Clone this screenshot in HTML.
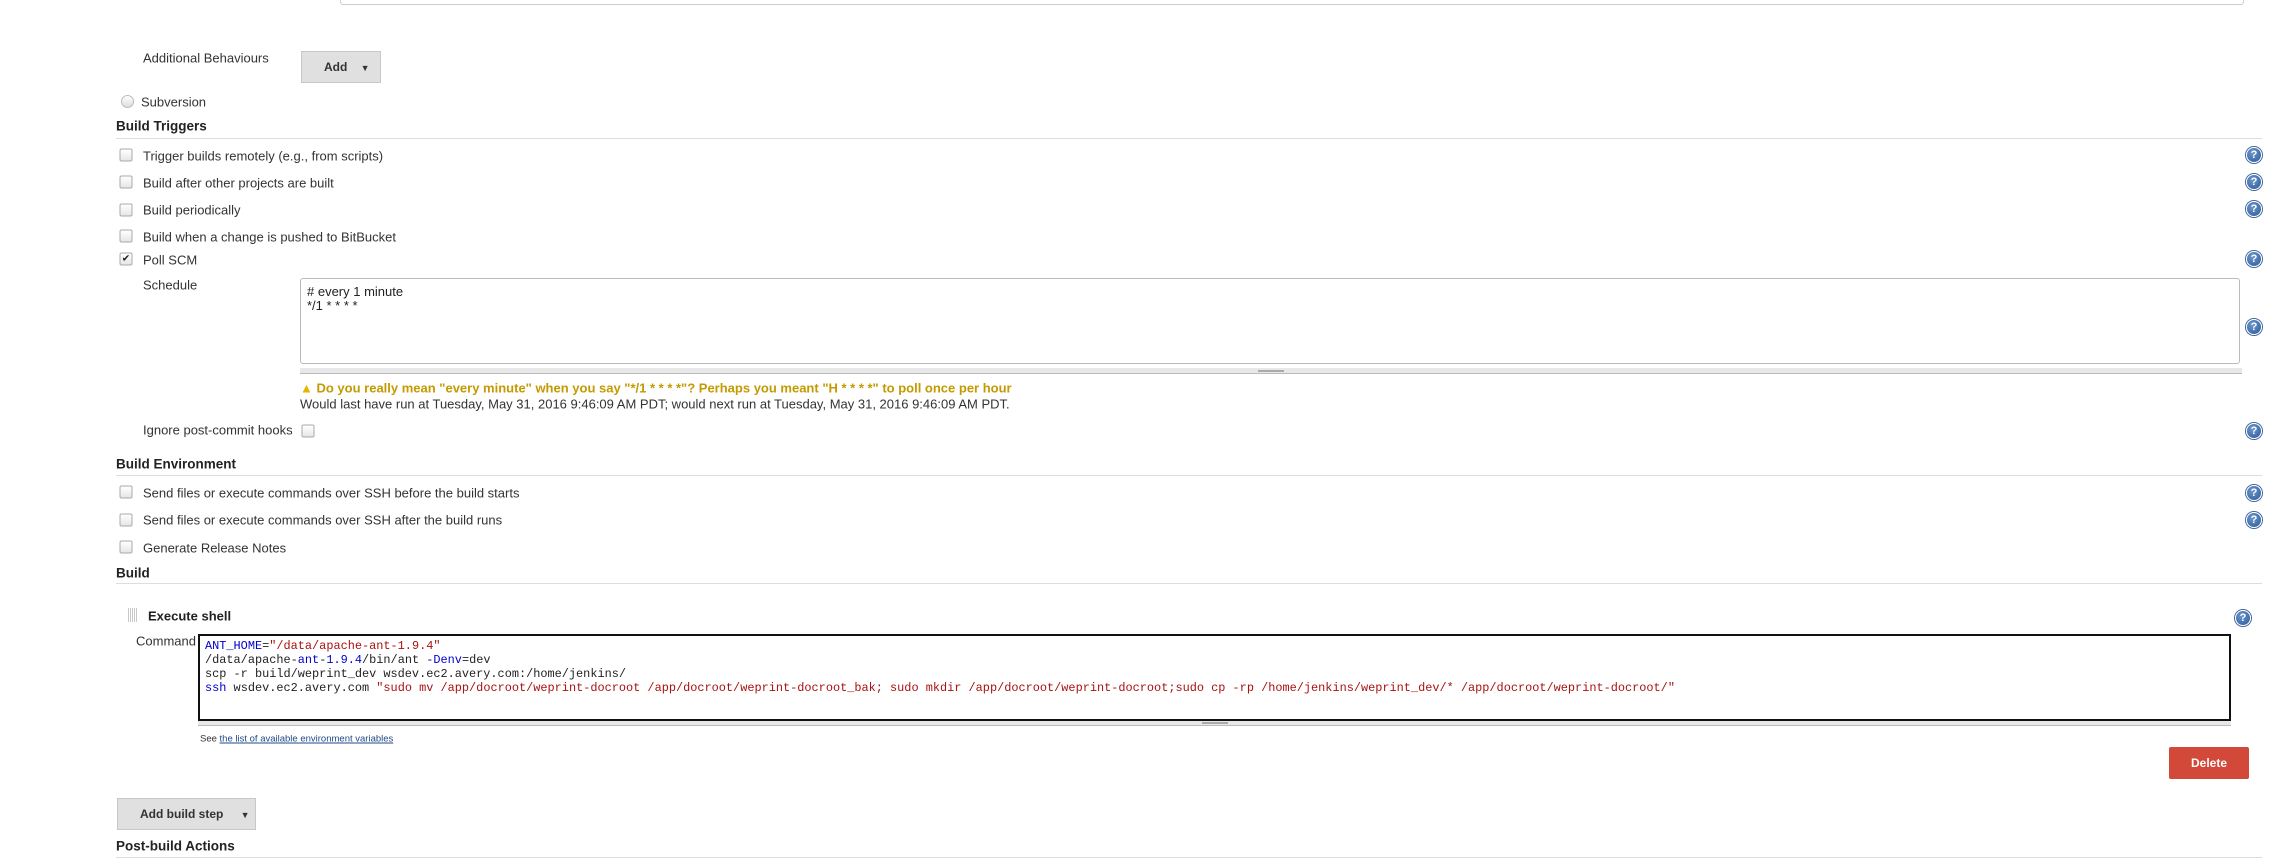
<!DOCTYPE html>
<html><head><meta charset="utf-8"><style>
body{margin:0;width:2271px;height:859px;background:#fff;position:relative;overflow:hidden;font-family:"Liberation Sans",Arial,sans-serif;font-size:13px;color:#333}
.a{position:absolute;white-space:nowrap}
.t{transform:translateY(-50%)}
.h{font-weight:bold;font-size:13.5px;color:#222}
.line{position:absolute;height:1px;background:#ddd;left:116px;width:2146px}
.cb{position:absolute;width:11px;height:11px;border:1px solid #aaa;border-radius:2px;background:linear-gradient(#fff,#e6e6e6);transform:translate(-50%,-50%)}
.help{position:absolute;width:14px;height:14px;border-radius:50%;background:radial-gradient(circle at 40% 35%,#6d98cf,#2b5894);border:1.5px solid #fff;box-shadow:0 0 0 1px #3d659c;transform:translate(-50%,-50%);color:#fff;font:bold 11px "Liberation Sans",sans-serif;text-align:center;line-height:14px}
.btn{position:absolute;background:#e0e0e0;border:1px solid #c8c8c8;font-weight:bold;font-size:12px;color:#333;box-sizing:border-box}
.code{font-family:"Liberation Mono",monospace;font-size:11.9px;line-height:14px;color:#222}
.b{color:#00c}.r{color:#a11}
</style></head><body>
<div class="a" style="left:340px;top:-10px;width:1902px;height:14px;border:1px solid #ccc;border-top:none;border-radius:0 0 3px 3px"></div>
<div class="a t" style="left:143px;top:58px">Additional Behaviours</div>
<div class="btn" style="left:301px;top:51px;width:80px;height:32px;line-height:30px;padding-left:22px">Add <span style="font-size:9px;margin-left:10px">▼</span></div>
<div class="a" style="left:121px;top:95px;width:11px;height:11px;border:1px solid #bbb;border-radius:50%;background:linear-gradient(#fff,#ddd)"></div>
<div class="a t" style="left:141px;top:102px">Subversion</div>
<div class="a t h" style="left:116px;top:126px">Build Triggers</div>
<div class="line" style="top:138px"></div>

<div class="cb" style="left:126px;top:155px"></div><div class="a t" style="left:143px;top:156px">Trigger builds remotely (e.g., from scripts)</div>
<div class="cb" style="left:126px;top:182px"></div><div class="a t" style="left:143px;top:183px">Build after other projects are built</div>
<div class="cb" style="left:126px;top:210px"></div><div class="a t" style="left:143px;top:210px">Build periodically</div>
<div class="cb" style="left:126px;top:236px"></div><div class="a t" style="left:143px;top:237px">Build when a change is pushed to BitBucket</div>
<div class="cb" style="left:126px;top:259px;font-size:10px;line-height:11px;text-align:center;color:#222">✔</div><div class="a t" style="left:143px;top:260px">Poll SCM</div>
<div class="a t" style="left:143px;top:285px">Schedule</div>
<div class="a" style="left:300px;top:278px;width:1940px;height:86px;border:1px solid #bbb;border-radius:3px;padding:6px;box-sizing:border-box;line-height:14px;font-size:13px;color:#222"># every 1 minute<br>*/1 * * * *</div>
<div class="a" style="left:300px;top:368px;width:1942px;height:5px;background:#e8e8e8;border-bottom:1px solid #bbb"></div>
<div class="a" style="left:1258px;top:370px;width:26px;height:2px;background:#aaa"></div>
<div class="a t" style="left:300px;top:388px;color:#c49a00;font-weight:bold;font-size:13px"><span style="color:#e8b400">▲</span> Do you really mean "every minute" when you say "*/1 * * * *"? Perhaps you meant "H * * * *" to poll once per hour</div>
<div class="a t" style="left:300px;top:404px">Would last have run at Tuesday, May 31, 2016 9:46:09 AM PDT; would next run at Tuesday, May 31, 2016 9:46:09 AM PDT.</div>
<div class="a t" style="left:143px;top:430px">Ignore post-commit hooks</div>
<div class="cb" style="left:308px;top:431px"></div>

<div class="a t h" style="left:116px;top:464px">Build Environment</div>
<div class="line" style="top:475px"></div>
<div class="cb" style="left:126px;top:492px"></div><div class="a t" style="left:143px;top:493px">Send files or execute commands over SSH before the build starts</div>
<div class="cb" style="left:126px;top:520px"></div><div class="a t" style="left:143px;top:520px">Send files or execute commands over SSH after the build runs</div>
<div class="cb" style="left:126px;top:547px"></div><div class="a t" style="left:143px;top:548px">Generate Release Notes</div>
<div class="a t h" style="left:116px;top:573px">Build</div>
<div class="line" style="top:583px"></div>

<div class="a" style="left:128px;top:608px;width:10px;height:14px;background:repeating-linear-gradient(90deg,#bbb 0 1px,transparent 1px 2px),#fff;opacity:.8"></div>
<div class="a t h" style="left:148px;top:616px;font-size:13px">Execute shell</div>
<div class="a t" style="left:136px;top:641px">Command</div>
<div class="a code" style="left:198px;top:634px;width:2033px;height:87px;border:2px solid #111;box-sizing:border-box;padding:3px 5px">
<span class="b">ANT_HOME</span>=<span class="r">"/data/apache-ant-1.9.4"</span><br>
/data/apache-<span class="b">ant</span>-<span class="b">1.9.4</span>/bin/ant <span class="b">-Denv</span>=dev<br>
scp -r build/weprint_dev wsdev.ec2.avery.com:/home/jenkins/<br>
<span class="b">ssh</span> wsdev.ec2.avery.com <span class="r">"sudo mv /app/docroot/weprint-docroot /app/docroot/weprint-docroot_bak; sudo mkdir /app/docroot/weprint-docroot;sudo cp -rp /home/jenkins/weprint_dev/* /app/docroot/weprint-docroot/"</span></div>
<div class="a" style="left:198px;top:721px;width:2033px;height:4px;background:#e8e8e8;border-bottom:1px solid #bbb"></div>
<div class="a" style="left:1202px;top:722px;width:26px;height:2px;background:#aaa"></div>
<div class="a t" style="left:200px;top:739px;font-size:9.5px">See <span style="color:#204a87;text-decoration:underline">the list of available environment variables</span></div>
<div class="a" style="left:2169px;top:747px;width:80px;height:32px;background:#d24939;border-radius:2px;color:#fff;font-weight:bold;font-size:12px;text-align:center;line-height:32px">Delete</div>
<div class="btn" style="left:117px;top:798px;width:139px;height:32px;line-height:30px;padding-left:22px">Add build step <span style="font-size:9px;margin-left:14px">▼</span></div>
<div class="a t h" style="left:116px;top:846px">Post-build Actions</div>
<div class="line" style="top:857px"></div>

<div class="help" style="left:2254px;top:155px">?</div>
<div class="help" style="left:2254px;top:182px">?</div>
<div class="help" style="left:2254px;top:209px">?</div>
<div class="help" style="left:2254px;top:259px">?</div>
<div class="help" style="left:2254px;top:327px">?</div>
<div class="help" style="left:2254px;top:431px">?</div>
<div class="help" style="left:2254px;top:493px">?</div>
<div class="help" style="left:2254px;top:520px">?</div>
<div class="help" style="left:2243px;top:618px">?</div>
</body></html>
